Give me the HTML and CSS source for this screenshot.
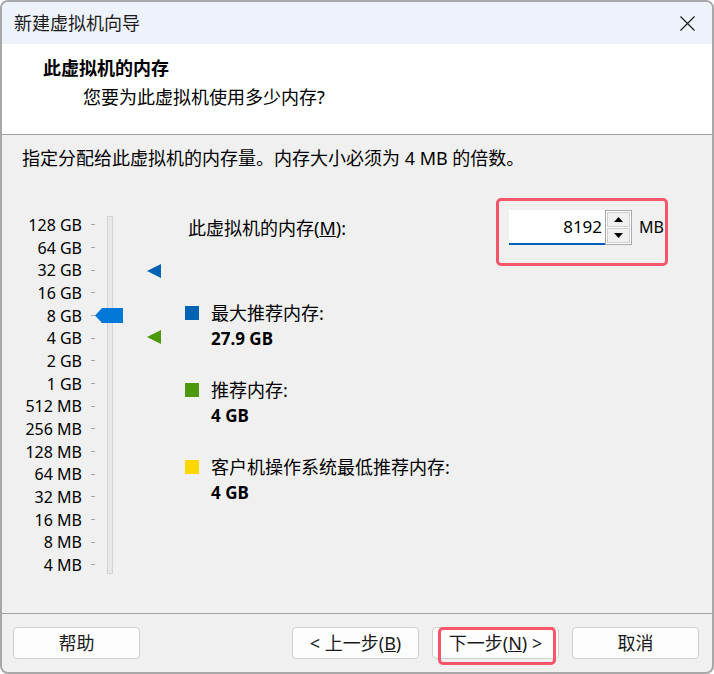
FILE: index.html
```html
<!DOCTYPE html>
<html lang="zh-CN">
<head>
<meta charset="utf-8">
<title>新建虚拟机向导</title>
<link rel="stylesheet" href="styles.css">
</head>
<body>
<div class="window">
  <div class="titlebar">
    <span class="title">新建虚拟机向导</span>
    <span class="close">
      <svg width="15" height="15" viewBox="0 0 15 15"><path d="M0.5 0.5 L14.5 14.5 M14.5 0.5 L0.5 14.5" stroke="#1a1a1a" stroke-width="1.2" fill="none"/></svg>
    </span>
  </div>
  <div class="header">
    <div class="h-title">此虚拟机的内存</div>
    <div class="h-sub">您要为此虚拟机使用多少内存?</div>
  </div>
  <div class="body">
    <p class="desc">指定分配给此虚拟机的内存量。内存大小必须为 4 MB 的倍数。</p>
    <div class="main">
      <div class="scale">
        <ul class="labels">
          <li><span>128 GB</span><i class="tick"></i></li>
          <li><span>64 GB</span><i class="tick"></i></li>
          <li><span>32 GB</span><i class="tick"></i></li>
          <li><span>16 GB</span><i class="tick"></i></li>
          <li><span>8 GB</span><i class="tick"></i></li>
          <li><span>4 GB</span><i class="tick"></i></li>
          <li><span>2 GB</span><i class="tick"></i></li>
          <li><span>1 GB</span><i class="tick"></i></li>
          <li><span>512 MB</span><i class="tick"></i></li>
          <li><span>256 MB</span><i class="tick"></i></li>
          <li><span>128 MB</span><i class="tick"></i></li>
          <li><span>64 MB</span><i class="tick"></i></li>
          <li><span>32 MB</span><i class="tick"></i></li>
          <li><span>16 MB</span><i class="tick"></i></li>
          <li><span>8 MB</span><i class="tick"></i></li>
          <li><span>4 MB</span><i class="tick"></i></li>
        </ul>
        <div class="track"></div>
        <svg class="thumb" width="28" height="15" viewBox="0 0 28 15"><polygon points="0,7.5 7,0 28,0 28,15 7,15" fill="#0078d7"/></svg>
        <svg class="marker marker-max" width="14" height="14" viewBox="0 0 14 14"><polygon points="0,7 14,0 14,14" fill="#0063b1"/></svg>
        <svg class="marker marker-rec" width="14" height="14" viewBox="0 0 14 14"><polygon points="0,7 14,0 14,14" fill="#4c9a0c"/></svg>
      </div>
      <div class="panel">
        <div class="mem-row">
          <label class="mem-label">此虚拟机的内存(<u>M</u>):</label>
          <div class="highlight">
            <div class="input">8192</div>
            <div class="spin">
              <div class="spin-btn"><svg width="9" height="5" viewBox="0 0 9 5"><polygon points="0,5 4.5,0 9,5" fill="#000"/></svg></div>
              <div class="spin-btn"><svg width="9" height="5" viewBox="0 0 9 5"><polygon points="0,0 9,0 4.5,5" fill="#000"/></svg></div>
            </div>
            <span class="unit">MB</span>
          </div>
        </div>
        <div class="legend">
          <div class="item">
            <div class="item-label"><span class="sq sq-blue"></span>最大推荐内存:</div>
            <div class="item-value">27.9 GB</div>
          </div>
          <div class="item">
            <div class="item-label"><span class="sq sq-green"></span>推荐内存:</div>
            <div class="item-value">4 GB</div>
          </div>
          <div class="item">
            <div class="item-label"><span class="sq sq-yellow"></span>客户机操作系统最低推荐内存:</div>
            <div class="item-value">4 GB</div>
          </div>
        </div>
      </div>
    </div>
  </div>
  <div class="footer">
    <button class="btn">帮助</button>
    <div class="spacer"></div>
    <button class="btn">&lt; 上一步(<u>B</u>)</button>
    <button class="btn btn-next">下一步(<u>N</u>) &gt;<span class="hl-frame"></span></button>
    <button class="btn">取消</button>
  </div>
</div>
</body>
</html>
```

FILE: styles.css
```css
* { box-sizing: border-box; }

html, body {
  margin: 0;
  padding: 0;
  background: #ffffff;
}

body {
  font-family: "Noto Sans", "Noto Sans CJK SC", sans-serif;
  font-size: 18px;
  color: #000;
}

.window {
  width: 714px;
  height: 674px;
  border: 2px solid #a8a8a8;
  border-radius: 8px;
  overflow: hidden;
  display: flex;
  flex-direction: column;
  background: #f0f0f0;
}

.titlebar {
  height: 42px;
  flex: none;
  background: #eef2fa;
  display: flex;
  align-items: center;
  justify-content: space-between;
  padding: 0 17px 0 12px;
}

.title {
  font-size: 18px;
  line-height: 42px;
  color: #1a1a1a;
}

.close {
  display: flex;
  margin-top: 1px;
}

.header {
  height: 91px;
  flex: none;
  background: #ffffff;
  border-bottom: 1px solid #a0a0a0;
  padding: 12px 0 0 41px;
}

.h-title {
  font-weight: bold;
  line-height: 24px;
}

.h-sub {
  line-height: 24px;
  margin: 5px 0 0 40px;
}

.body {
  flex: 1;
  padding-top: 11px;
}

.desc {
  margin: 0 0 0 20px;
  line-height: 24px;
}

.main {
  display: flex;
  margin-top: 28px;
}

.scale {
  position: relative;
  width: 183px;
  flex: none;
  display: flex;
  align-items: flex-start;
}

.labels {
  list-style: none;
  margin: 0;
  padding: 15.67px 0 0 0;
}

.labels li {
  height: 22.67px;
  display: grid;
  grid-template-columns: 80px 9px 4px;
  align-items: center;
}

.labels span {
  text-align: right;
  font-size: 16px;
  line-height: 22px;
  white-space: nowrap;
}

.tick {
  grid-column: 3;
  height: 1px;
  background: #a8a8a8;
}

.track {
  width: 6px;
  height: 358px;
  margin: 18px 0 0 12px;
  background: #e8e8e8;
  border: 1px solid #d4d4d4;
}

.thumb {
  position: absolute;
  left: 93px;
  top: 110px;
}

.marker {
  position: absolute;
  left: 145px;
}

.marker-max { top: 66px; }
.marker-rec { top: 132px; }

.panel {
  width: 483px;
  flex: none;
}

.mem-row {
  display: flex;
  justify-content: space-between;
  align-items: flex-start;
}

.mem-label {
  margin: 18px 0 0 3px;
  line-height: 24px;
}

.highlight {
  display: flex;
  align-items: flex-start;
  border: 3px solid #f7566a;
  border-radius: 5px;
  padding: 9px 1px 18px 10px;
}

.input {
  width: 96px;
  height: 35px;
  background: #ffffff;
  border-bottom: 2px solid #005fb8;
  text-align: right;
  padding-right: 3px;
  font-size: 17px;
  line-height: 33px;
}

.spin {
  width: 27px;
  height: 35px;
  border: 1px solid #a8a8a8;
  background: #ffffff;
  padding: 1px;
  display: flex;
  flex-direction: column;
  gap: 1px;
}

.spin-btn {
  flex: 1;
  background: #f0f0f0;
  border: 1px solid #cfcfcf;
  display: flex;
  align-items: center;
  justify-content: center;
}

.unit {
  margin-left: 7px;
  font-size: 16px;
  line-height: 35px;
}

.legend {
  margin-top: 34.5px;
  display: flex;
  flex-direction: column;
  gap: 27px;
}

.item-label {
  display: flex;
  align-items: center;
  line-height: 25px;
}

.sq {
  width: 14px;
  height: 14px;
  margin-right: 12px;
  flex: none;
}

.sq-blue { background: #0063b1; }
.sq-green { background: #4c9a0c; }
.sq-yellow { background: #ffd800; }

.item-value {
  margin-left: 26px;
  font-weight: bold;
  font-size: 17px;
  line-height: 25px;
}

.footer {
  height: 59px;
  flex: none;
  border-top: 1px solid #a0a0a0;
  padding: 13px 13px 0 11px;
  display: flex;
  align-items: flex-start;
}

.spacer { flex: 1; }

.btn {
  position: relative;
  width: 127px;
  height: 32px;
  margin-left: 13px;
  background: #fdfdfd;
  border: 1px solid #d0d0d0;
  border-radius: 4px;
  font-family: inherit;
  font-size: 18px;
  color: #1a1a1a;
  padding: 0;
  line-height: 30px;
}

.btn:first-child { margin-left: 0; }

.hl-frame {
  position: absolute;
  left: 5px;
  right: 2px;
  top: -1px;
  bottom: -7px;
  border: 3px solid #f7566a;
  border-radius: 5px;
}
```
